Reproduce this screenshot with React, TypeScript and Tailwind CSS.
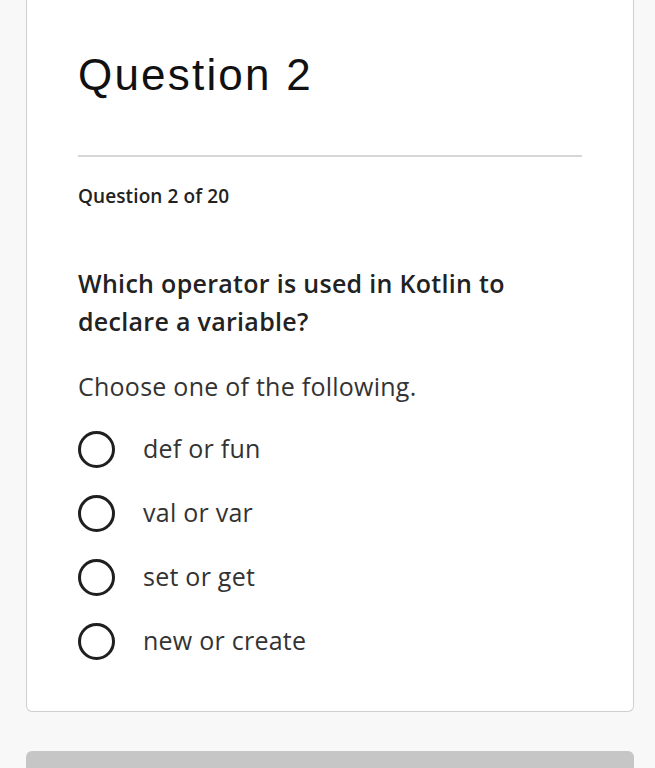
const options = ['def or fun', 'val or var', 'set or get', 'new or create'];

export default function App() {
  return (
    <div className="min-h-[768px] bg-[#f8f8f8] overflow-hidden" style={{ fontFamily: '"Open Sans", sans-serif' }}>
      {/* Question card */}
      <div className="ml-[26px] w-[608px] bg-white border border-t-0 border-[#cfcfcf] rounded-b-[6px] px-[51px] pt-[49px] pb-[38px]">
        <h1
          className="text-[44px] leading-[52px] text-[#111] tracking-[2.2px]"
          style={{ fontFamily: '"Liberation Sans", Arial, sans-serif' }}
        >
          Question 2
        </h1>
        <div className="mt-[54px] h-[2px] bg-[#d6d6d6]" />
        <p className="mt-[26px] text-[19px] leading-[26px] font-semibold tracking-[0.1px] text-[#222]">
          Question 2 of 20
        </p>
        <p className="mt-[55px] text-[25px] leading-[38px] font-semibold tracking-[0.3px] text-[#222]">
          Which operator is used in Kotlin to declare a variable?
        </p>
        <p className="mt-[30px] text-[25px] leading-[32px] tracking-[0.25px] text-[#333]">
          Choose one of the following.
        </p>
        <div className="mt-[15px] flex flex-col">
          {options.map((opt) => (
            <label key={opt} className="h-[64px] flex items-center gap-[28px] cursor-pointer">
              <span className="w-[37px] h-[37px] rounded-full border-[3px] border-[#1f1f1f] shrink-0" />
              <span className="text-[25px] tracking-[0.25px] text-[#333]">{opt}</span>
            </label>
          ))}
        </div>
      </div>

      {/* Bottom button placeholder */}
      <div className="mt-[39px] ml-[26px] w-[608px] h-[60px] bg-[#c6c6c6] rounded-t-[6px]" />
    </div>
  );
}
